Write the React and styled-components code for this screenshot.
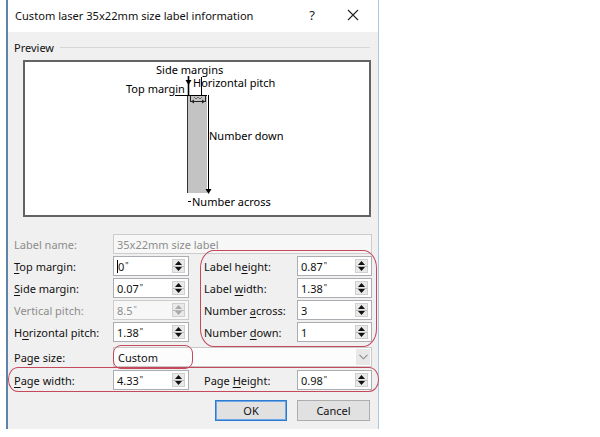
import React from "react";
import styled, { createGlobalStyle } from "styled-components";

const GlobalStyle = createGlobalStyle`
  html, body { margin: 0; padding: 0; background: #fff; }
  body { font-family: "Noto Sans", "Open Sans", sans-serif; }
  * { box-sizing: border-box; }
`;

const Page = styled.div`
  position: relative;
  width: 600px;
  height: 437px;
  background: #fff;
  overflow: hidden;
`;

const Dialog = styled.div`
  margin-left: 6px;
  width: 373px;
  height: 429px;
  border-left: 2px solid #5f83a9;
  border-right: 1px solid #a8c8e2;
  background: #f0f0f0;
  display: flex;
  flex-direction: column;
`;

const TitleBar = styled.div`
  height: 32px;
  flex: none;
  background: #fff;
  display: flex;
  align-items: center;
  padding: 0 0 2px 7px;
`;

const TitleText = styled.div`
  font-size: 11.1px;
  color: #111;
  flex: 1;
`;

const Help = styled.div`
  font-size: 13px;
  color: #222;
  width: 40px;
  text-align: center;
  padding-right: 4px;
`;

const CloseBtn = styled.div`
  width: 44px;
  display: flex;
  justify-content: center;
  padding-right: 6px;
`;

const Body = styled.div`
  flex: 1;
  display: flex;
  flex-direction: column;
  padding: 0 6px;
`;

const GroupHead = styled.div`
  margin-top: 8px;
  height: 14px;
  display: flex;
  align-items: center;
  font-size: 11px;
  color: #111;
`;

const GroupLine = styled.div`
  flex: 1;
  margin: 1px 2px 0 6px;
  border-top: 1px solid #d6d6d6;
`;

const PreviewBox = styled.div`
  margin: 6px 1px 0 9px;
  height: 157px;
  border: 2px solid #636363;
  background: #fff;
`;

const Form = styled.div`
  margin-top: 17px;
  display: flex;
  flex-direction: column;
  gap: 2px;
`;

const Row = styled.div`
  display: grid;
  grid-template-columns: 99px 76px 15px 93px 75px;
  height: 20px;
  margin-top: ${(p) => p.$mt || 0}px;
  align-items: center;
`;

const Label = styled.div`
  font-size: 11px;
  color: ${(p) => (p.$disabled ? "#8d8d8d" : "#111")};
  grid-column: ${(p) => p.$col || "auto"};
  white-space: nowrap;
`;

const Key = styled.span`
  text-decoration: underline;
  text-underline-offset: 2px;
`;

const Field = styled.div`
  grid-column: ${(p) => p.$span || "auto"};
  height: 20px;
  display: flex;
  align-items: center;
  border: 1px solid ${(p) => (p.$disabled ? "#cccccc" : "#abadb3")};
  background: ${(p) => (p.$disabled ? "#f7f7f7" : "#fff")};
  padding-left: 3px;
`;

const FieldText = styled.div`
  flex: 1;
  font-size: 11px;
  color: ${(p) => (p.$disabled ? "#8d8d8d" : "#111")};
  white-space: nowrap;
  display: flex;
  align-items: center;
`;

const Unit = styled.span`
  font-size: 8px;
  align-self: flex-start;
  margin-top: 1px;
  margin-left: 1px;
`;

const Caret = styled.span`
  display: inline-block;
  width: 1px;
  height: 13px;
  background: #000;
`;

const Spinner = styled.div`
  width: 13px;
  height: 14px;
  margin-right: 3px;
  border: 1px solid #cfcfcf;
  background: #e9e9e9;
  display: flex;
  flex-direction: column;
`;

const SpinHalf = styled.div`
  flex: 1;
  display: flex;
  align-items: center;
  justify-content: center;
  border-top: ${(p) => (p.$bottom ? "1px solid #b9b9b9" : "none")};
`;

const SelectField = styled.div`
  grid-column: 2 / 6;
  height: 20px;
  display: flex;
  align-items: center;
  border: 1px solid #c9c9c9;
  background: #fcfcfc;
  padding-left: 4px;
`;

const SelectText = styled.div`
  flex: 1;
  font-size: 11px;
  color: #111;
`;

const DropBtn = styled.div`
  width: 14px;
  height: 16px;
  margin-right: 1px;
  background: #e8e8e8;
  display: flex;
  align-items: center;
  justify-content: center;
`;

const Buttons = styled.div`
  margin-top: 10px;
  display: flex;
  justify-content: flex-end;
  gap: 10px;
  padding-right: 2px;
`;

const Button = styled.div`
  width: ${(p) => p.$w}px;
  height: 21px;
  display: flex;
  align-items: center;
  justify-content: center;
  font-size: 11px;
  color: #111;
  background: #e1e1e1;
  border: 1px solid ${(p) => (p.$primary ? "#2a7bd1" : "#adadad")};
  box-shadow: ${(p) => (p.$primary ? "inset 0 0 0 1px #6ea7e3" : "none")};
`;

const Mark = styled.div`
  position: absolute;
  left: ${(p) => p.$x}px;
  top: ${(p) => p.$y}px;
  width: ${(p) => p.$w}px;
  height: ${(p) => p.$h}px;
  border: 1px solid #c4495c;
  border-radius: ${(p) => p.$r};
  pointer-events: none;
`;

const Arrow = ({ up, disabled }) => (
  <svg width="7" height="4" viewBox="0 0 7 4">
    <polygon
      points={up ? "0,4 7,4 3.5,0" : "0,0 7,0 3.5,4"}
      fill={disabled ? "#a9a9a9" : "#111"}
    />
  </svg>
);

const Spin = ({ disabled }) => (
  <Spinner>
    <SpinHalf>
      <Arrow up disabled={disabled} />
    </SpinHalf>
    <SpinHalf $bottom>
      <Arrow disabled={disabled} />
    </SpinHalf>
  </Spinner>
);

const Value = ({ v, caret, disabled, span }) => (
  <Field $disabled={disabled} $span={span}>
    <FieldText $disabled={disabled}>
      {caret && <Caret />}
      {v}
      <Unit>"</Unit>
    </FieldText>
    <Spin disabled={disabled} />
  </Field>
);

const Plain = ({ v }) => (
  <Field>
    <FieldText>{v}</FieldText>
    <Spin />
  </Field>
);

const Lbl = ({ pre, k, post, disabled, col }) => (
  <Label $disabled={disabled} $col={col}>
    {pre}
    {k && <Key>{k}</Key>}
    {post}
  </Label>
);

const T = ({ x, y, children }) => (
  <text x={x} y={y} fontFamily='"Noto Sans", "Open Sans", sans-serif' fontSize="11" fill="#000">
    {children}
  </text>
);

const Diagram = () => (
  <svg width="344" height="153" viewBox="0 0 344 153">
    <g transform="translate(-25,-62)">
      <rect x="187" y="95" width="20" height="98" fill="#c3c3c3" />
      <line x1="187.5" y1="95" x2="187.5" y2="193" stroke="#333" strokeWidth="1" />
      <line x1="208.5" y1="95" x2="208.5" y2="190" stroke="#000" strokeWidth="1" />
      <polygon points="205.5,189 211.5,189 208.5,194" fill="#000" />
      <line x1="175" y1="95.5" x2="207" y2="95.5" stroke="#000" strokeWidth="1" />
      <line x1="188.5" y1="76" x2="188.5" y2="95" stroke="#000" strokeWidth="1.6" />
      <polygon points="185.5,80 191.5,80 188.5,85" fill="#000" />
      <line x1="201.5" y1="77" x2="201.5" y2="95" stroke="#000" strokeWidth="1" />
      <line x1="190.5" y1="96" x2="190.5" y2="102" stroke="#222" strokeWidth="1" />
      <line x1="205.5" y1="96" x2="205.5" y2="102" stroke="#222" strokeWidth="1" />
      <line x1="191" y1="101.5" x2="205" y2="101.5" stroke="#222" strokeWidth="1" />
      <polygon points="191,101.5 194,99.5 194,103.5" fill="#222" />
      <polygon points="205,101.5 202,99.5 202,103.5" fill="#222" />
      <path d="M194 97 L196 99 L198 97 L200 99 L202 97" stroke="#555" strokeWidth="0.8" fill="none" />
      <line x1="188" y1="201.5" x2="191" y2="201.5" stroke="#000" strokeWidth="1" />
      <T x="156" y="74">Side margins</T>
      <T x="126" y="93">Top margin</T>
      <T x="193" y="87">Horizontal pitch</T>
      <T x="209" y="140">Number down</T>
      <T x="192" y="206">Number across</T>
    </g>
  </svg>
);

export default function App() {
  return (
    <Page>
      <GlobalStyle />
      <Dialog>
        <TitleBar>
          <TitleText>Custom laser 35x22mm size label information</TitleText>
          <Help>?</Help>
          <CloseBtn>
            <svg width="12" height="12" viewBox="0 0 12 12">
              <path d="M1 1 L11 11 M11 1 L1 11" stroke="#222" strokeWidth="1.1" />
            </svg>
          </CloseBtn>
        </TitleBar>
        <Body>
          <GroupHead>
            Preview
            <GroupLine />
          </GroupHead>
          <PreviewBox>
            <Diagram />
          </PreviewBox>
          <Form>
            <Row>
              <Lbl pre="Label name:" disabled />
              <Field $disabled $span="2 / 6">
                <FieldText $disabled>35x22mm size label</FieldText>
              </Field>
            </Row>
            <Row>
              <Lbl k="T" post="op margin:" />
              <Value v="0" caret />
              <Lbl pre="Label h" k="e" post="ight:" col="4" />
              <Value v="0.87" />
            </Row>
            <Row>
              <Lbl k="S" post="ide margin:" />
              <Value v="0.07" />
              <Lbl pre="Label " k="w" post="idth:" col="4" />
              <Value v="1.38" />
            </Row>
            <Row>
              <Lbl pre="Vertical pitch:" disabled />
              <Value v="8.5" disabled />
              <Lbl pre="Number " k="a" post="cross:" col="4" />
              <Plain v="3" />
            </Row>
            <Row>
              <Lbl pre="H" k="o" post="rizontal pitch:" />
              <Value v="1.38" />
              <Lbl pre="Number " k="d" post="own:" col="4" />
              <Plain v="1" />
            </Row>
            <Row $mt={3}>
              <Lbl pre="Page size:" />
              <SelectField>
                <SelectText>Custom</SelectText>
                <DropBtn>
                  <svg width="9" height="6" viewBox="0 0 9 6">
                    <path d="M0.5 0.8 L4.5 4.8 L8.5 0.8" stroke="#8a8a8a" strokeWidth="1.1" fill="none" />
                  </svg>
                </DropBtn>
              </SelectField>
            </Row>
            <Row $mt={1}>
              <Lbl k="P" post="age width:" />
              <Value v="4.33" />
              <Lbl pre="Page " k="H" post="eight:" col="4" />
              <Value v="0.98" />
            </Row>
          </Form>
          <Buttons>
            <Button $w={72} $primary>OK</Button>
            <Button $w={73}>Cancel</Button>
          </Buttons>
        </Body>
      </Dialog>
      <Mark $x={200} $y={250} $w={177} $h={97} $r="14px / 18px" />
      <Mark $x={113} $y={345} $w={80} $h={24} $r="8px" />
      <Mark $x={8} $y={367} $w={371} $h={25} $r="10px / 12px" />
    </Page>
  );
}
